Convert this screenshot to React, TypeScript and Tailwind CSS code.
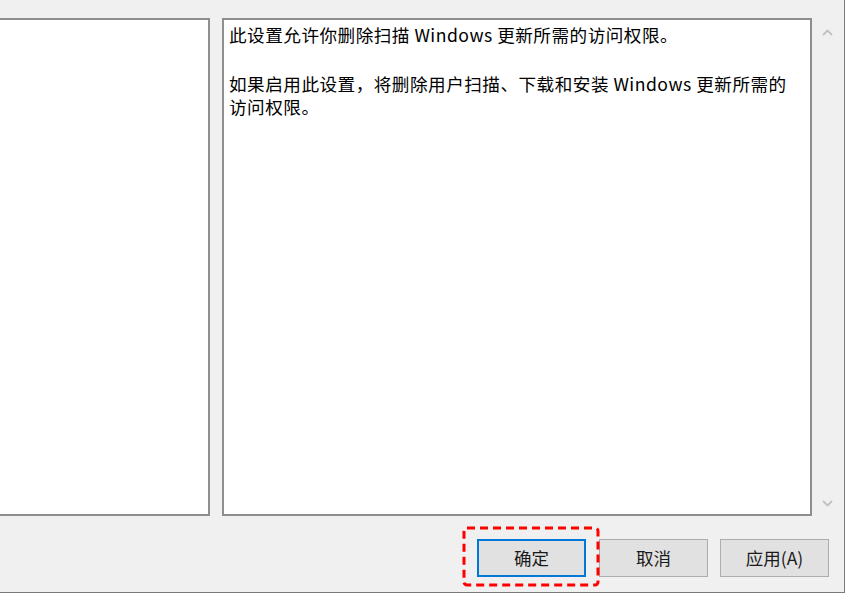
import React from "react";

const font = { fontFamily: '"Microsoft YaHei", "Noto Sans CJK SC", "Noto Sans", sans-serif' };

function Chevron({ up }: { up?: boolean }) {
  return (
    <svg width="11" height="7" viewBox="0 0 11 7">
      <path
        d={up ? "M1 6 L5.5 1.5 L10 6" : "M1 1 L5.5 5.5 L10 1"}
        fill="none"
        stroke="#c2c2c2"
        strokeWidth="1.8"
      />
    </svg>
  );
}

export default function App() {
  return (
    <div className="w-[858px] h-[605px] bg-white" style={font}>
      <div className="relative w-[845px] h-[593px] bg-[#f0f0f0] border-r border-b border-[#7a7a7a] flex flex-col">
        <div className="flex pt-[18px] h-[516px]">
          <div className="w-[210px] h-full bg-white border-t-2 border-r-2 border-b-2 border-[#8e8e8e]" />
          <div className="ml-[12px] w-[590px] h-full bg-white border-2 border-[#8e8e8e] pl-[5px] pt-[3px] text-[17.6px] leading-[23px] tracking-[0.5px] text-black">
            <div className="whitespace-nowrap">此设置允许你删除扫描 Windows 更新所需的访问权限。</div>
            <div className="h-[26px]" />
            <div className="whitespace-nowrap">如果启用此设置，将删除用户扫描、下载和安装 Windows 更新所需的</div>
            <div className="whitespace-nowrap">访问权限。</div>
          </div>
          <div className="flex-1 flex flex-col items-center justify-between pt-[11px] pb-[9px] pr-[2px]">
            <Chevron up />
            <Chevron />
          </div>
        </div>
        <div className="flex mt-[23px] pl-[477px] text-[17.5px] text-[#1a1a1a]">
          <div className="w-[109px] h-[38px] bg-[#e1e1e1] border-2 border-[#0078d7] flex items-center justify-center">确定</div>
          <div className="ml-[13px] w-[109px] h-[38px] bg-[#e1e1e1] border border-[#adadad] flex items-center justify-center">取消</div>
          <div className="ml-[12px] w-[109px] h-[38px] bg-[#e1e1e1] border border-[#adadad] flex items-center justify-center">应用(A)</div>
        </div>
        <svg className="absolute left-[462px] top-[526px]" width="138" height="61" viewBox="0 0 138 61">
          <rect x="2" y="2" width="134" height="57" rx="3" fill="none" stroke="#f00" strokeWidth="3" strokeDasharray="8 5" />
        </svg>
      </div>
    </div>
  );
}
